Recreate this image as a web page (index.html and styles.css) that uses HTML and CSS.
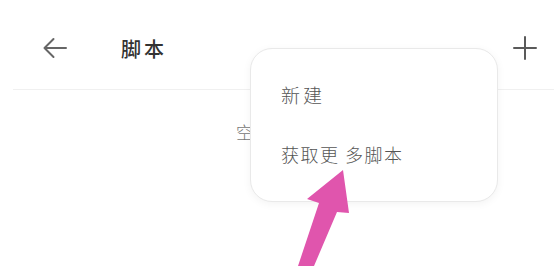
FILE: index.html
```html
<!DOCTYPE html>
<html lang="zh">
<head>
<meta charset="utf-8">
<title>脚本</title>
<link rel="stylesheet" href="styles.css">
</head>
<body>
<div class="screen">
  <header class="topbar">
    <div class="left">
      <svg class="back" width="26" height="22" viewBox="0 0 26 22" fill="none" stroke="#666" stroke-width="2" stroke-linecap="round" stroke-linejoin="round">
        <path d="M24 11H2.5M11.5 2L2.5 11L11.5 20"/>
      </svg>
      <h1 class="title">脚本</h1>
    </div>
    <svg class="plus" width="24" height="24" viewBox="0 0 24 24" fill="none" stroke="#5a5a5a" stroke-width="2" stroke-linecap="round">
      <path d="M12 1V23M1 12H23"/>
    </svg>
  </header>
  <main class="content">
    <p class="empty">空空如也</p>
  </main>
  <div class="menu">
    <div class="menu-item new">新建</div>
    <div class="menu-item more">获取更 多脚本</div>
  </div>
  <svg class="pointer" width="554" height="266" viewBox="0 0 554 266">
    <polygon points="343,170 349,213 337,212 314,266 298,266 319,203 307,199" fill="#e055ad"/>
  </svg>
</div>
</body>
</html>
```
FILE: styles.css
```css
* { box-sizing: border-box; }
html, body { margin: 0; padding: 0; background: #fff; }
body {
  width: 554px;
  height: 266px;
  overflow: hidden;
  font-family: "Noto Sans CJK SC", "Noto Sans", sans-serif;
}
.screen {
  position: relative;
  width: 554px;
  height: 266px;
}
.topbar {
  height: 90px;
  margin-left: 13px;
  padding: 7px 17px 0 29px;
  display: flex;
  align-items: center;
  justify-content: space-between;
  border-bottom: 1px solid #f0f0f0;
}
.left {
  display: flex;
  align-items: center;
  gap: 53px;
}
.back { display: block; }
.plus { display: block; }
.title {
  margin: 0;
  font-size: 20px;
  font-weight: 500;
  letter-spacing: 3px;
  color: #333;
}
.content {
  padding-top: 29px;
  text-align: center;
}
.empty {
  margin: 0;
  padding-right: 6px;
  font-size: 17px;
  letter-spacing: 2px;
  color: #777;
  font-weight: 300;
}
.menu {
  position: absolute;
  left: 250px;
  top: 48px;
  width: 248px;
  height: 154px;
  background: #fff;
  border: 1px solid #e9e9e9;
  border-radius: 22px;
  box-shadow: 0 2px 8px rgba(0,0,0,0.05);
  padding: 15px 0 0 30px;
  display: flex;
  flex-direction: column;
}
.menu-item {
  height: 60px;
  display: flex;
  align-items: center;
  color: #555;
  font-weight: 300;
}
.new {
  font-size: 19px;
  letter-spacing: 3px;
}
.more {
  font-size: 18px;
  letter-spacing: 1.5px;
}
.pointer {
  position: absolute;
  left: 0;
  top: 0;
  pointer-events: none;
}
```
